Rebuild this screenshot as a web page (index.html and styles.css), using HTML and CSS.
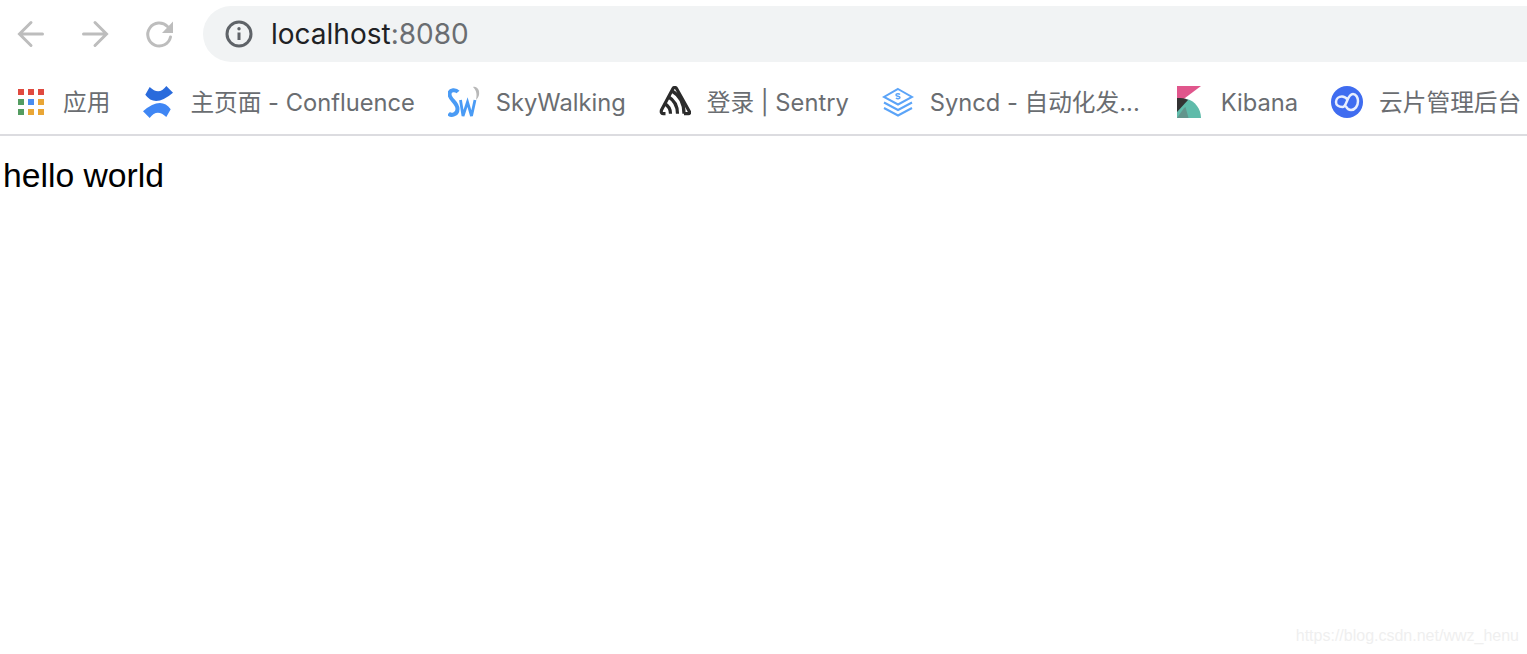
FILE: index.html
```html
<!DOCTYPE html>
<html lang="zh">
<head>
<meta charset="utf-8">
<title>localhost:8080</title>
<link rel="stylesheet" href="styles.css">
</head>
<body>
<header class="chrome">
  <div class="toolbar">
    <svg class="nav" viewBox="0 0 32 32"><path d="M27.500 16H5M16 4.500 4.500 16 16 27.500"/></svg>
    <svg class="nav" viewBox="0 0 32 32"><path d="M4.500 16H27M16 4.500 27.500 16 16 27.500"/></svg>
    <svg class="nav" viewBox="0 0 32 32"><path d="M27.500 19A11.500 11.500 0 1 1 24.500 8.500"/><path class="fill" d="M30 3.500V15H19z"/></svg>
    <div class="omnibox">
      <svg class="info" viewBox="0 0 28 28"><circle cx="14" cy="14" r="12"/><path d="M14 12.500v7.500"/><circle class="dot" cx="14" cy="8.700" r="1.700"/></svg>
      <span class="url"><span class="host">localhost</span>:8080</span>
    </div>
  </div>
  <nav class="bookmarks">
    <a class="bm bm-apps">
      <svg class="ico" viewBox="0 0 32 32">
        <rect x="3" y="3" width="6" height="6" fill="#e04a3f"/><rect x="13" y="3" width="6" height="6" fill="#e04a3f"/><rect x="23" y="3" width="6" height="6" fill="#e04a3f"/>
        <rect x="3" y="13" width="6" height="6" fill="#539c61"/><rect x="13" y="13" width="6" height="6" fill="#4a8df0"/><rect x="23" y="13" width="6" height="6" fill="#e9a636"/>
        <rect x="3" y="23" width="6" height="6" fill="#539c61"/><rect x="13" y="23" width="6" height="6" fill="#e9a636"/><rect x="23" y="23" width="6" height="6" fill="#e9a636"/>
      </svg>
      <span class="label">应用</span>
    </a>
    <a class="bm">
      <svg class="ico" viewBox="0 0 32 32">
        <path fill="#2a6bdc" d="M7.700 1 3.300 8.700Q13 22 31 6.700L24.300 0Q17 10 7.700 1z"/>
        <path fill="#3f86f4" d="M24.300 31 28.700 23.300Q19 10 1 25.300L7.700 32Q15 22 24.300 31z"/>
      </svg>
      <span class="label">主页面 - Confluence</span>
    </a>
    <a class="bm">
      <svg class="ico" viewBox="0 0 32 32">
        <path class="sw" d="M10 6C8 3.500 1.500 3 1.500 8c0 6 8 8 8 15 0 6-6.500 7-9 4.500"/>
        <path class="sw thin" d="M12.500 14 15 30l4.500-14 4 14L27 14"/>
        <path class="wave" d="M25 1c4-1 7 3 6 8-.5 2-2 4-3 5 1-5 1-9-3-13z"/>
      </svg>
      <span class="label">SkyWalking</span>
    </a>
    <a class="bm">
      <svg class="ico" viewBox="-1 0 32 32">
        <path class="sentry" d="M24 27.700h4.500c1 0 1.500-1 1-2L16.500 2.500a2 2 0 0 0-3.500 0L1.500 24c-.6 2 0 3.700 1.500 3.700h2.500"/>
        <path class="sentry" d="M10.500 27.700C10.500 23 8 19.500 4.500 17.500M17.500 27.700C17.500 20 14 14 8 10.500M24 27.700C24 17 19 9 12 5"/>
      </svg>
      <span class="label">登录 | Sentry</span>
    </a>
    <a class="bm">
      <svg class="ico" viewBox="0 0 32 32">
        <path class="sync" d="M16 3 30 11 16 18.500 2 11z"/>
        <path class="sync" d="M2 16.500l14 7.500 14-7.500M2 22l14 7.500L30 22"/>
        <path class="sync thin" d="M18 8.500c-1-1-4-1-4 .5s4 1 4 2.500-3 1.500-4 .5"/>
      </svg>
      <span class="label">Syncd - 自动化发...</span>
    </a>
    <a class="bm">
      <svg class="ico" viewBox="0 0 32 32">
        <path fill="#e0568c" d="M4 0h24L4 18z"/>
        <path fill="#5fbbaa" d="M4 32V20l10-7c8 2 14 10 14 19z"/>
        <path fill="#333" d="M4 12c4 0 8 0 11 2L4 26z"/>
        <path fill="#62958c" d="M4 32l7-10 1.500-1 3 11z"/>
      </svg>
      <span class="label">Kibana</span>
    </a>
    <a class="bm">
      <svg class="ico" viewBox="0 0 32 32">
        <circle cx="16" cy="16" r="16" fill="#3f6cf0"/>
        <path class="cloud" d="M11.500 21C16 21 16 8 22 8c3 0 5 3.500 5 7 0 5-3 9-7 9-2.500 0-4-1.500-5-3.500M11.500 21C7.500 21 5 19 5 16c0-3.500 3-5.500 6-5.500 2 0 4 1 5.500 3"/>
      </svg>
      <span class="label">云片管理后台</span>
    </a>
  </nav>
</header>
<main class="page">hello world</main>
<div class="watermark">https://blog.csdn.net/wwz_henu</div>
</body>
</html>
```
FILE: styles.css
```css
html, body {
  margin: 0;
  height: 100%;
  background: #fff;
  overflow: hidden;
}
body {
  font-family: "Liberation Sans", Arial, sans-serif;
  position: relative;
}
.chrome {
  border-bottom: 2px solid #dcdce0;
  height: 134px;
}
.toolbar {
  display: flex;
  align-items: center;
  height: 68px;
  padding: 0 0 0 15px;
  gap: 32px;
  box-sizing: border-box;
}
.nav {
  width: 32px;
  height: 32px;
  flex: none;
  fill: none;
  stroke: #bdbdbd;
  stroke-width: 3;
  stroke-linecap: round;
}
.nav .fill {
  fill: #bdbdbd;
  stroke: none;
}
.omnibox {
  flex: 1 0 auto;
  height: 56px;
  margin-right: -60px;
  margin-left: -4px;
  border-radius: 28px;
  background: #f1f3f4;
  display: flex;
  align-items: center;
  padding-left: 22px;
  gap: 18px;
}
.info {
  width: 28px;
  height: 28px;
  fill: none;
  stroke: #5f6368;
  stroke-width: 3;
}
.info .dot {
  fill: #5f6368;
  stroke: none;
}
.url {
  font: 28px/36px Inter, sans-serif;
  color: #6a6d71;
}
.host {
  color: #202124;
}
.bookmarks {
  display: flex;
  align-items: center;
  gap: 33px;
  height: 66px;
  padding: 2px 0 0 15px;
  box-sizing: border-box;
  white-space: nowrap;
}
.bm {
  display: flex;
  align-items: center;
  gap: 16px;
  font: 23.700px/32px Inter, "Noto Sans CJK SC", sans-serif;
  color: #6a6d71;
}
.bm-apps {
  margin-right: -1px;
}
.label {
  padding-top: 1px;
}
.ico {
  width: 32px;
  height: 32px;
  flex: none;
}
.sw {
  fill: none;
  stroke: #4a9bf5;
  stroke-width: 4;
}
.sw.thin {
  stroke-width: 2.800;
}
.wave {
  fill: #b8b8b8;
}
.sentry {
  fill: none;
  stroke: #2b2b2b;
  stroke-width: 3.200;
  stroke-linejoin: round;
}
.sync {
  fill: none;
  stroke: #5ba4f8;
  stroke-width: 2;
  stroke-linejoin: miter;
}
.sync.thin {
  stroke-width: 1.500;
}
.cloud {
  fill: none;
  stroke: #e8eefe;
  stroke-width: 2.500;
  stroke-linecap: round;
}
.page {
  font-size: 33.700px;
  color: #000;
  padding: 20px 0 0 3px;
  line-height: 38px;
}
.watermark {
  position: absolute;
  right: 8px;
  bottom: 9px;
  font-size: 16px;
  color: #efefef;
}
```
